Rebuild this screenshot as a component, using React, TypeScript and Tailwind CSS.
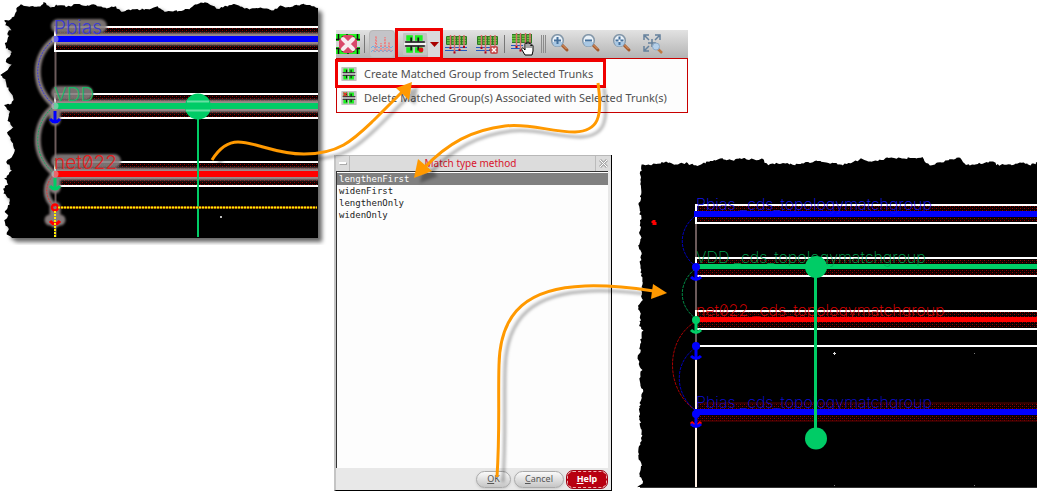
import React from "react";

type Point = [number, number];

/* Breaks a coarse outline into small steps with a repeatable jitter, like torn paper. */
function tear(points: Point[], seed: number): string {
  let state = seed;
  const next = () => {
    state = (state * 16807) % 2147483647;
    return state / 2147483647 - 0.5;
  };
  const out: string[] = [];
  for (let i = 0; i < points.length - 1; i++) {
    const [x1, y1] = points[i];
    const [x2, y2] = points[i + 1];
    const steps = Math.max(1, Math.round(Math.hypot(x2 - x1, y2 - y1) / 2));
    for (let s = 0; s < steps; s++) {
      const t = s / steps;
      out.push(`${(x1 + (x2 - x1) * t + next() * 2).toFixed(1)},${(y1 + (y2 - y1) * t + next() * 2).toFixed(1)}`);
    }
  }
  return out.join(" ");
}

const beforeEdge = tear(
  [
    [12, 237], [7, 235], [8, 228], [4, 222], [8, 216], [4, 211], [8, 208], [10, 200], [4, 193], [4, 188], [8, 184],
    [5, 178], [11, 171], [7, 162], [11, 157], [15, 150], [11, 140], [6, 133], [13, 128], [7, 120], [9, 112], [5, 106],
    [12, 103], [13, 98], [9, 90], [6, 85], [6, 80], [1, 75], [6, 71], [11, 65], [6, 62], [8, 58], [12, 52], [5, 48],
    [6, 42], [9, 36], [7, 33], [11, 30], [6, 25], [4, 20], [8, 21], [14, 17], [16, 12], [18, 7], [22, 4], [27, 7],
    [33, 6], [38, 7], [44, 3], [50, 7], [58, 5], [66, 7], [76, 4], [84, 6], [95, 5], [105, 8], [115, 7], [121, 11],
    [135, 10], [148, 9], [157, 7], [163, 11], [178, 11], [189, 9], [195, 4], [205, 3], [213, 5], [217, 9], [227, 6],
    [237, 4], [245, 9], [262, 8], [274, 11], [280, 6], [288, 7], [298, 5], [303, 4], [310, 6], [318, 8],
  ],
  71,
);

const afterEdge = tear(
  [
    [638, 487], [643, 482], [639, 475], [641, 465], [638, 452], [642, 436], [640, 420], [639, 408], [643, 390],
    [639, 380], [642, 370], [638, 360], [640, 350], [641, 340], [643, 330], [639, 325], [641, 316], [638, 305],
    [642, 300], [642, 285], [641, 272], [640, 262], [642, 252], [638, 246], [641, 240], [640, 232], [641, 222],
    [640, 212], [638, 205], [640, 200], [641, 190], [640, 180], [641, 170], [642, 164], [650, 165], [660, 163],
    [670, 162], [676, 165], [686, 163], [695, 166], [703, 163], [712, 161], [720, 159], [735, 160], [740, 158],
    [755, 160], [763, 159], [768, 165], [780, 163], [795, 165], [810, 162], [822, 161], [830, 163], [843, 165],
    [855, 161], [861, 159], [870, 162], [880, 160], [887, 158], [922, 158], [930, 165], [950, 160], [961, 158],
    [966, 165], [985, 163], [992, 161], [996, 165], [1010, 165], [1021, 162], [1030, 165], [1037, 163], [1200, 164],
    [1500, 162], [2400, 164],
  ],
  1913,
);

function Hatch({ id }: { id: string }) {
  return (
    <pattern id={id} width="4" height="4" patternUnits="userSpaceOnUse">
      <rect width="4" height="4" fill="#0a0000" />
      <rect x="0" y="0" width="1" height="1" fill="#980000" />
      <rect x="2" y="2" width="1" height="1" fill="#980000" />
      <rect x="2" y="0" width="1" height="1" fill="#3c0000" />
      <rect x="0" y="2" width="1" height="1" fill="#3c0000" />
    </pattern>
  );
}

function Anchor({ x, y, color }: { x: number; y: number; color: string }) {
  return (
    <g stroke={color} fill="none" strokeWidth="3">
      <circle cx={x} cy={y} r="4" fill={color} stroke="none" />
      <path d={`M${x} ${y}V${y + 13}`} />
      <path d={`M${x - 5} ${y + 10}q5 5 10 0`} />
    </g>
  );
}

const beforeTrunks = [
  { name: "Pbias", y: 39, color: "#0000ff", label: "#3b3bd0", labelWidth: 46 },
  { name: "VDD", y: 106, color: "#00cc66", label: "#1bb567", labelWidth: 32 },
  { name: "net022", y: 174, color: "#ff0000", label: "#e02020", labelWidth: 60 },
];

function BeforeLayout() {
  return (
    <svg className="h-[245px] w-[333px] shrink-0" role="img" aria-label="Trunks before matching">
      <defs>
        <Hatch id="hatchBefore" />
        <filter id="softLine" filterUnits="userSpaceOnUse" x="20" y="0" width="320" height="245">
          <feGaussianBlur stdDeviation="1" />
        </filter>
        <filter id="sheet" x="-5%" y="-5%" width="112%" height="112%">
          <feDropShadow dx="4" dy="4" stdDeviation="2" floodColor="#000" floodOpacity="0.6" />
        </filter>
        <clipPath id="sheetClip"><rect width="318" height="237.500" /></clipPath>
      </defs>
      <polygon points={`${beforeEdge} 318,8 318,238 12,238`} filter="url(#sheet)" />
      <g clipPath="url(#sheetClip)">
        <path d="M55.500 51V237" stroke="#6b5a5a" strokeWidth="2" />
        {beforeTrunks.map((t) => (
          <g key={t.name}>
            <rect x="55" y={t.y - 12} width="263" height="24" fill="url(#hatchBefore)" />
            <rect x="55" y={t.y - 6} width="270" height="12" fill="#9a8c8c" filter="url(#softLine)" />
            <path d={`M400 ${t.y - 12}H55V${t.y + 12}H400`} fill="none" stroke="#fff" strokeWidth="2" />
            <path
              d={`M58 ${t.y - 13}h${t.labelWidth - 4}`}
              stroke="#857d7d"
              strokeWidth="14"
              strokeLinecap="round"
              opacity="0.9"
              filter="url(#softLine)"
            />
          </g>
        ))}
        <g fill="none" stroke="#857b7b" strokeWidth="6" filter="url(#softLine)">
          <path d="M55 39C32 55 32 88 55 106" />
          <path d="M55 106C32 122 32 157 55 174" />
          <path d="M55 174C44 183 44 198 55 207" />
          <path d="M55 108V120M55 176V188M55 207V222M50 220h10" strokeWidth="11" strokeLinecap="round" />
        </g>
        <g fill="none" strokeDasharray="2 1">
          <path d="M55 39C32 55 32 88 55 106" stroke="#3838d8" />
          <path d="M55 106C32 122 32 157 55 174" stroke="#15a860" />
          <path d="M55 174C44 183 44 198 55 207" stroke="#d83838" />
        </g>
        {beforeTrunks.map((t) => (
          <g key={t.name}>
            <rect x="54" y={t.y - 3} width="264" height="6" fill={t.color} />
            <circle cx="55" cy={t.y} r="3.500" fill="#d8d0d8" opacity="0.5" />
            <text x="54" y={t.y - 5} fill={t.label} className="font-['Inter',sans-serif] text-[19px] font-light slashed-zero">
              {t.name}
            </text>
          </g>
        ))}
        <g fill="none" strokeWidth="3">
          <path d="M55 111V123M50 119q5 6 10 0" stroke="#0000ff" />
          <path d="M55 178V190M50 186q5 6 10 0" stroke="#00cc66" />
          <path d="M50 221q5 6 10 0" stroke="#ff0000" />
        </g>
        <path d="M198 106V237" stroke="#00cc66" strokeWidth="2" />
        <circle cx="198" cy="106.500" r="13" fill="#00cc66" />
        <path d="M187 101.500h22M186 110.500h24" stroke="#66e0a3" strokeWidth="2" />
        <circle cx="55" cy="207.500" r="3" fill="none" stroke="#ff0000" strokeWidth="2.500" />
        <path d="M58 207.500H317" stroke="#a84000" strokeWidth="2" />
        <path d="M58 207.500H317M55 211V237" stroke="#ffee00" strokeWidth="2" strokeDasharray="2 1" />
        <rect x="220" y="216" width="2" height="2" fill="#bbb" />
      </g>
    </svg>
  );
}

const afterTrunks = [
  { name: "Pbias _cds_topologymatchgroup", top: 205, mid: 214, bottom: 223, color: "#0000ff", label: "#1414ee", framed: true },
  { name: "VDD _cds_topologymatchgroup", top: 258, mid: 267, bottom: 276, color: "#00cc66", label: "#00a050", framed: true },
  { name: "net022 _cds_topologymatchgroup", top: 311, mid: 320, bottom: 329, color: "#ff0000", label: "#e00000", framed: true },
  { name: "Pbias _cds_topologymatchgroup", top: 403, mid: 412, bottom: 421, color: "#0000ff", label: "#0c0cd8", framed: false },
];

function AfterLayout() {
  return (
    <svg className="mt-[2px] h-[331px] min-w-0 flex-1" role="img" aria-label="Trunks after matching">
      <defs>
        <Hatch id="hatchAfter" />
      </defs>
      <g transform="translate(-637 -157)">
        <polygon points={`${afterEdge} 2400,164 2400,487 638,487`} />
        <path d="M696 223V346" stroke="#6b5a5a" strokeWidth="2" />
        <path d="M696 346V487" stroke="#fff0e4" strokeWidth="2" />
        <g fill="none" strokeDasharray="3 1">
          <path d="M695 216C678 230 678 252 695 266" stroke="#0000b8" />
          <path d="M695 269C678 283 678 305 695 318" stroke="#008844" />
          <path d="M695 322C665 340 665 389 695 410" stroke="#a80000" />
          <path d="M695 348C674 363 674 393 695 410" stroke="#0000b8" />
        </g>
        <path d="M696 346H2400" stroke="#fff" strokeWidth="2" />
        {afterTrunks.map((t) => (
          <g key={t.mid}>
            <rect x="697" y={t.top} width="1700" height={t.bottom - t.top} fill="url(#hatchAfter)" />
            <path
              d={t.framed ? `M2400 ${t.top}H696V${t.bottom}H2400` : `M2400 ${t.top}H697M697 ${t.bottom}H2400`}
              fill="none"
              stroke={t.framed ? "#fff" : "#600000"}
              strokeWidth={t.framed ? 2 : 1}
            />
            <rect x="694" y={t.mid - 3} width="1700" height={t.color === "#0000ff" ? 6 : 5} fill={t.color} />
            <text x="696" y={t.mid - 4} fill={t.label} className="font-['Inter',sans-serif] text-[16px] font-extralight slashed-zero">
              {t.name}
            </text>
          </g>
        ))}
        <path d="M691 422q5 6 10 0" fill="none" stroke="#ff0000" strokeWidth="3" />
        <Anchor x={696} y={267} color="#0000ff" />
        <Anchor x={696} y={320} color="#00cc66" />
        <Anchor x={696} y={346} color="#0000ff" />
        <Anchor x={696} y={414} color="#0000ff" />
        <path d="M815.500 267V438" stroke="#00cc66" strokeWidth="3" />
        <circle cx="816" cy="267" r="11" fill="#00cc66" />
        <circle cx="816" cy="438.500" r="11" fill="#00cc66" />
        <path d="M652.500 220h3v2h1v3h-4v-2h-1v-2h1z" fill="#ff0000" />
        <path d="M833 353.500h3M834.500 352v3" stroke="#ddd" />
        <path d="M974 353.500h1M834 485.500h1M974 485.500h1" stroke="#777" />
        <path d="M640 487.500H2400" stroke="#333" />
      </g>
    </svg>
  );
}

function MatchIcon({ className, children }: { className: string; children?: React.ReactNode }) {
  return (
    <svg className={className} viewBox="0 0 22 20" aria-hidden="true">
      <rect width="22" height="20" rx="1" fill="#c4c4c4" />
      <path d="M3 2h6v5H3zM11 2h7v5h-7zM3 13h6v5H3zM11 13h7v5h-7z" fill="#19f01e" />
      <path d="M1 10h20" stroke="#f4f4f4" strokeWidth="2" />
      <path d="M2 8.200h18M2 11.800h18" stroke="#151515" strokeWidth="1.500" />
      <path d="M7.500 4v4M14 4v4M7.500 12v4M14 12v4" stroke="#151515" strokeWidth="1.600" />
      {children}
    </svg>
  );
}

function TrunkIcon({ children }: { children?: React.ReactNode }) {
  return (
    <svg className="h-[22px] w-6" viewBox="0 0 24 22" aria-hidden="true">
      <rect x="1" y="3" width="21" height="9" rx="1" fill="#2b7a22" />
      <path d="M2 5h19M2 7.500h19M2 10h19" stroke="#6fcb45" strokeWidth="1.500" strokeDasharray="4 1" />
      <path d="M0 14.500h22M0 17.500h22" stroke="#2458c0" strokeWidth="1.200" />
      <path d="M5.500 2v13M9.500 2v17M14.500 2v15M19 2v12" stroke="#d9706c" strokeWidth="1.500" />
      <path d="M4.500 15h2M8.500 19.500h2M13.500 17h2M18 14h2" stroke="#b00018" strokeWidth="2" />
      {children}
    </svg>
  );
}

function ZoomIcon({ glyph }: { glyph: string }) {
  return (
    <svg className="h-5 w-5" viewBox="0 0 20 20" aria-hidden="true">
      <path d="M11.500 10.500l5.500 5.500" stroke="#a65a2c" strokeWidth="3" strokeLinecap="round" />
      <path d="M12 10.500l4.500 4.500" stroke="#e0a070" strokeWidth="1" />
      <circle cx="7.500" cy="6.500" r="5.800" fill="#e9f1f8" stroke="#8296a8" strokeWidth="1.500" />
      <path d="M2.500 8a5 4.500 0 0 0 10 0z" fill="#a9c8e4" />
      <path d={glyph} stroke="#45709c" strokeWidth="2" fill="none" />
    </svg>
  );
}

const iconButton = "flex h-[28px] items-center justify-center";

function Toolbar() {
  return (
    <div role="toolbar" className="flex h-[28px] items-center bg-gradient-to-b from-[#e2e2e2] to-[#b4b4b4]">
      <button aria-label="Remove constraint" className={`${iconButton} w-6`}>
        <svg className="h-[22px] w-6" viewBox="0 0 24 22" aria-hidden="true">
          <path d="M0 1h24v20H0z" fill="#22f022" />
          <path d="M0 8h24v6H0z" fill="#d4d4d4" />
          <path d="M0 6.500h24M0 15.500h24" stroke="#111" strokeWidth="1.500" />
          <path d="M2.500 1v5M6.500 3v4M11 1v3M17.500 3v4M21.500 1v5M2.500 16v5M6.500 16v3M12 18v3M17.500 16v3M21.500 16v5" stroke="#111" strokeWidth="1.500" />
          <path d="M8 2h8l5 5v8l-5 5H8l-5-5V7z" fill="#d9486a" />
          <path d="M7 6l10 10M17 6L7 16" stroke="#f6ecf0" strokeWidth="4" strokeLinecap="round" />
        </svg>
      </button>
      <span className="ml-1 h-[18px] w-px bg-[#777]" />
      <button aria-label="Show spectrum" className={`${iconButton} ml-1 w-[26px] rounded-sm border border-[#b8b8b8] bg-[#c4c4c8]`}>
        <svg className="h-[20px] w-[22px]" viewBox="0 0 22 20" aria-hidden="true">
          <path d="M0 14l2-2 2 2 2-2 2 2 2-2 2 2 2-2 2 2 2-2 2 2 2-2M0 18l2-2 2 2 2-2 2 2 2-2 2 2 2-2 2 2 2-2 2 2 2-2" fill="none" stroke="#6fb0e4" />
          <path d="M2 17h2l1-15 1 15h3l1-8 1 8h2l1-14 1 14h2l1-9 1 9h2" fill="none" stroke="#f07c7c" strokeDasharray="2 1" />
        </svg>
      </button>
      <div className="-my-[2px] flex h-[32px] w-[48px] items-center justify-between border-3 border-[#f00000]">
        <button aria-label="Create matched group" className={`${iconButton} ml-1 w-[25px]`}>
          <MatchIcon className="h-[22px] w-6">
            <circle cx="16.500" cy="15.500" r="2.200" fill="#e01010" />
          </MatchIcon>
        </button>
        <button aria-label="More matched group commands" className="flex h-[26px] w-[12px] items-center justify-center bg-[#d9d9dc]">
          <svg className="h-[5px] w-[9px]" viewBox="0 0 9 5" aria-hidden="true"><path d="M0 0h9L4.500 5z" fill="#a80000" /></svg>
        </button>
      </div>
      <button aria-label="Create trunk" className={`${iconButton} ml-[2px] w-6`}><TrunkIcon /></button>
      <button aria-label="Delete trunk" className={`${iconButton} ml-[7px] w-6`}>
        <TrunkIcon>
          <rect x="14" y="13" width="8" height="8" rx="2" fill="#c65050" />
          <path d="M16 15l4 4M20 15l-4 4" stroke="#fff" strokeWidth="1.500" />
        </TrunkIcon>
      </button>
      <span className="ml-[4px] h-[18px] w-px bg-[#777]" />
      <button aria-label="Move trunk" className={`${iconButton} ml-[6px] w-6`}>
        <svg className="h-[26px] w-6" viewBox="0 0 24 26" aria-hidden="true">
          <rect x="1" y="3" width="20" height="9" fill="#2b7a22" />
          <path d="M1 5h20M1 7.500h20M1 10h20" stroke="#6fcb45" strokeWidth="1.500" strokeDasharray="4 1" />
          <path d="M0 14.500h12M0 17.500h9" stroke="#2458c0" strokeWidth="1.200" />
          <path d="M5.500 2v14M9.500 2v17M14.500 2v11M19 2v10" stroke="#d9706c" strokeWidth="1.500" />
          <path d="M4.500 16h2M8.500 19.500h2" stroke="#b00018" strokeWidth="2" />
          <path d="M14 24l-3-5c-1-2 1-3 2-1l1 1v-6c0-1.500 2-1.500 2 0v-1c0-1.500 2-1.500 2 0v1c0-1.500 2-1.500 2 0v2c0-1.500 2-1.500 2 0v5l-1 4z" fill="#fff" stroke="#000" />
          <path d="M16 13v4M18 13v4M20 14v3" stroke="#000" strokeWidth="0.700" />
        </svg>
      </button>
      <svg className="ml-[6px] h-[18px] w-[6px]" viewBox="0 0 6 18" aria-hidden="true">
        <path d="M0.500 0v18M2.500 0v18M4.500 0v18" stroke="#8c8c8c" />
      </svg>
      <button aria-label="Zoom in" className={`${iconButton} ml-[3px] w-5`}><ZoomIcon glyph="M7.500 3v7M4 6.500h7" /></button>
      <button aria-label="Zoom out" className={`${iconButton} ml-[11px] w-5`}><ZoomIcon glyph="M4 6.500h7" /></button>
      <button aria-label="Zoom to selection" className={`${iconButton} ml-[11px] w-5`}><ZoomIcon glyph="M3.500 6.500h3M8.500 6.500h3M7.500 2.500v3M7.500 8v3" /></button>
      <button aria-label="Zoom to fit" className={`${iconButton} ml-[10px] w-[22px]`}>
        <svg className="h-[22px] w-[22px]" viewBox="0 0 22 22" aria-hidden="true">
          <path d="M2 7V2h5M13 2h5v5M2 13v5h5M3 3l4 4M17 3l-4 4M3 17l4-4" fill="none" stroke="#64809c" strokeWidth="1.500" />
          <path d="M10 6v8M6 10h8" stroke="#64809c" strokeWidth="1.500" />
          <path d="M16 16l4 4" stroke="#c07840" strokeWidth="2.500" />
          <circle cx="14" cy="13.500" r="3.500" fill="#b5d0ea" stroke="#8ba8c6" />
        </svg>
      </button>
    </div>
  );
}

function MatchMenu() {
  return (
    <div role="menu" className="flex h-[55px] flex-col border border-[#c80000] bg-[#fdfdfd] font-['Noto_Sans','Open_Sans',sans-serif] text-[11px] leading-4 text-[#505050]">
      <button role="menuitem" className="-mx-[2px] flex h-[29px] w-[271px] shrink-0 items-center gap-[7px] whitespace-nowrap border-3 border-[#f00000] px-[3px]">
        <MatchIcon className="h-[14px] w-4 shrink-0" />
        Create Matched Group from Selected Trunks
      </button>
      <button role="menuitem" className="flex flex-1 items-center gap-[7px] whitespace-nowrap px-1 pb-1">
        <MatchIcon className="h-[14px] w-4 shrink-0">
          <path d="M3 2l5 5M8 2l-5 5" stroke="#e83030" strokeWidth="2" />
        </MatchIcon>
        Delete Matched Group(s) Associated with Selected Trunk(s)
      </button>
    </div>
  );
}

const methods = ["lengthenFirst", "widenFirst", "lengthenOnly", "widenOnly"];
const footerButton = "h-[17px] rounded-full border border-[#aaa] bg-gradient-to-b from-[#fafafa] to-[#c6c6c6] text-[#555] shadow-sm";

function MatchDialog() {
  const [selected, setSelected] = React.useState(methods[0]);
  return (
    <section
      role="dialog"
      aria-labelledby="match-title"
      className="flex h-[336px] w-[278px] shrink-0 flex-col border-b border-l-2 border-r border-b-black border-l-[#c4c4c4] border-r-black bg-[#e8e8e8] font-['Noto_Sans','Open_Sans',sans-serif]"
    >
      <header className="flex h-[16px] border-t border-[#b8b8b8] bg-[#dcdcdc]">
        <button aria-label="Window menu" className="flex w-[14px] items-center justify-center border-r border-[#bbb]">
          <span className="h-[3px] w-[8px] border border-[#aaa] border-l-white border-t-white bg-white" />
        </button>
        <h2 id="match-title" className="flex-1 pr-1 text-center text-[10px] leading-[15px] text-[#d8142c]">Match type method</h2>
        <button aria-label="Close" className="flex w-[16px] items-center justify-center border-l border-[#bbb]">
          <svg className="h-[9px] w-[9px]" viewBox="0 0 9 9" aria-hidden="true">
            <path d="M1 1l7 7M8 1L1 8" stroke="#aaa" strokeWidth="3" />
            <path d="M1 1l7 7M8 1L1 8" stroke="#fff" />
          </svg>
        </button>
      </header>
      <div role="listbox" aria-label="Match type" className="mr-[3px] flex flex-1 flex-col border-l border-t border-[#333] bg-[#fdfdfd] pt-px font-['DejaVu_Sans_Mono',monospace] text-[9px] leading-3 text-[#222]">
        {methods.map((m) => (
          <button
            key={m}
            role="option"
            aria-selected={m === selected}
            onClick={() => setSelected(m)}
            className={m === selected ? "h-3 bg-[#808080] pl-[2px] text-left text-white" : "h-3 pl-[2px] text-left"}
          >
            {m}
          </button>
        ))}
      </div>
      <footer className="flex h-[22px] items-center justify-end gap-[3px] pr-1 text-[9px] leading-3">
        <button className={`${footerButton} w-[35px]`}><u>O</u>K</button>
        <button className={`${footerButton} w-[50px]`}><u>C</u>ancel</button>
        <button className="h-[17px] w-[40px] rounded-[6px] border border-dashed border-[#f0b0b0] bg-[#b80010] font-bold text-white outline-1 outline-[#a00010]"><u>H</u>elp</button>
      </footer>
    </section>
  );
}

function FlowArrows() {
  return (
    <svg className="pointer-events-none absolute left-0 top-0 h-[492px] w-[1037px]" aria-hidden="true">
      <defs>
        <filter id="arrowShadow" filterUnits="userSpaceOnUse" x="180" y="60" width="520" height="432">
          <feDropShadow dx="6" dy="5" stdDeviation="1.500" floodColor="#000" floodOpacity="0.300" />
        </filter>
      </defs>
      <g fill="none" stroke="#ff9900" strokeWidth="3" filter="url(#arrowShadow)">
        <path d="M212 160C220 147 228 142 238 142C256 142 275 154 304 154C340 154 354 139 374 120L403 91" />
        <path d="M412 82L396 88L409 100z" fill="#ff9900" stroke="none" />
        <path d="M598 83C603 118 598 131 575 132C550 132 530 123 505 126C472 130 448 143 424 168" />
        <path d="M414 178L418 159L432 171z" fill="#ff9900" stroke="none" />
        <path d="M497 477C500 430 498 400 499 365C500 310 530 288 585 286C615 285 640 289 653 291" />
        <path d="M667 293L653 284L651 299z" fill="#ff9900" stroke="none" />
      </g>
    </svg>
  );
}

export default function App() {
  return (
    <main className="relative flex items-start overflow-hidden bg-white">
      <BeforeLayout />
      <div className="min-w-0 flex-1 pl-px pt-[30px]">
        <div className="ml-[2px] w-[352px]">
          <Toolbar />
          <MatchMenu />
        </div>
        <div className="mt-[42px] flex items-start gap-[25px]">
          <MatchDialog />
          <AfterLayout />
        </div>
      </div>
      <FlowArrows />
    </main>
  );
}
